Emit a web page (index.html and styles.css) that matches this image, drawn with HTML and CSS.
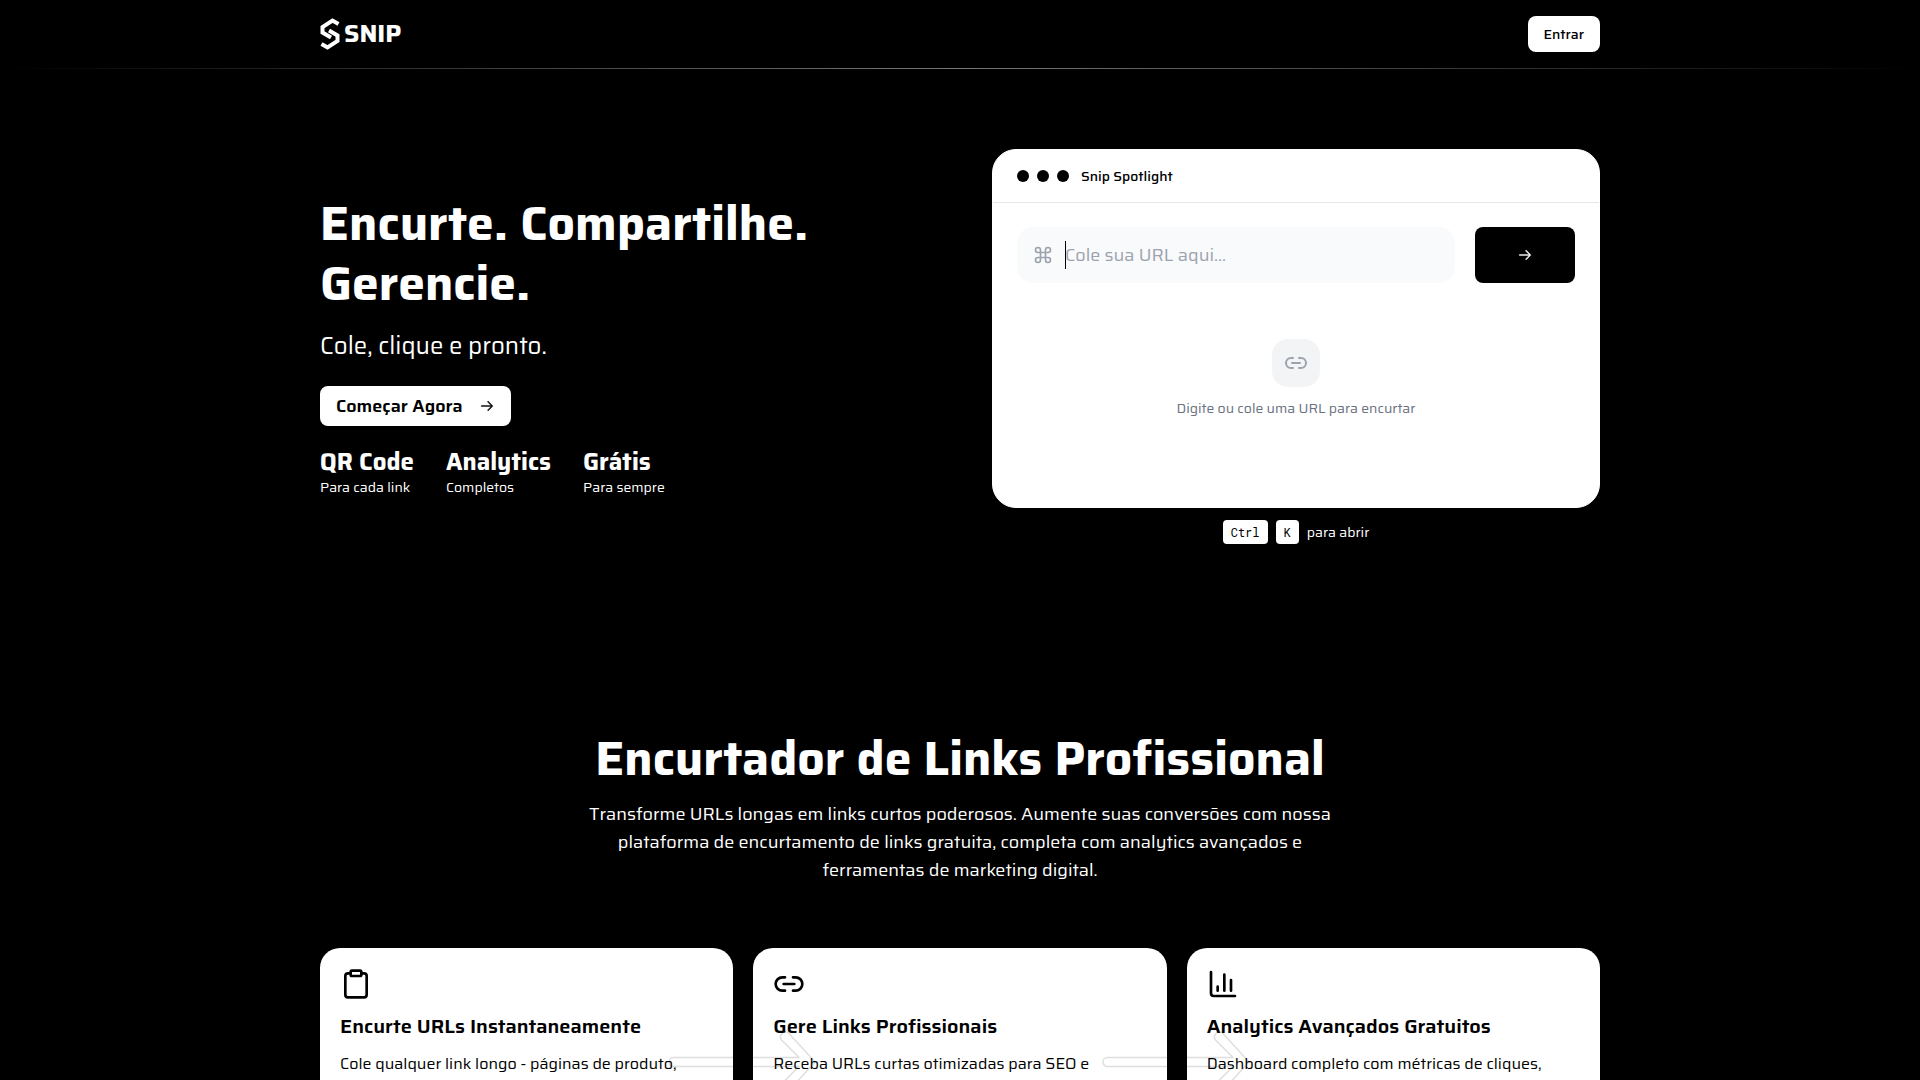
FILE: index.html
```html
<!DOCTYPE html>
<html lang="pt-BR">
<head>
<meta charset="utf-8">
<meta name="viewport" content="width=device-width, initial-scale=1">
<title>Snip</title>
<link rel="stylesheet" href="styles.css">
</head>
<body>
<div class="page">
  <header class="site-header">
    <div class="container header-row">
      <a class="brand" href="#">
        <svg class="brand-mark" viewBox="0 0 20 32" fill="none" stroke="currentColor" stroke-width="4" aria-hidden="true">
          <path d="M18.500 6 12.500 2.500 2.500 9v5.500l8.500 5"/><path d="M1.500 26 7.500 29.500l10-6.500v-5.500l-8.500-5"/>
        </svg>
        <span>SNIP</span>
      </a>
      <button class="btn btn-login" type="button">Entrar</button>
    </div>
  </header>

  <main>
    <section class="container hero">
      <div class="hero-copy">
        <h1>Encurte. Compartilhe. Gerencie.</h1>
        <p class="lead">Cole, clique e pronto.</p>
        <button class="btn btn-start" type="button">Começar Agora
          <svg class="arrow" viewBox="0 0 15 15" fill="currentColor" stroke="currentColor" stroke-width=".4" aria-hidden="true"><path d="M8.150 3.150a.5.5 0 0 1 .7 0l4 4a.5.5 0 0 1 0 .7l-4 4a.5.5 0 0 1-.7-.7L11.300 8H2.500a.5.5 0 0 1 0-1h8.800L8.150 3.850a.5.5 0 0 1 0-.7z"/></svg>
        </button>
        <dl class="stats">
          <div><dt>QR Code</dt><dd>Para cada link</dd></div>
          <div><dt>Analytics</dt><dd>Completos</dd></div>
          <div><dt>Grátis</dt><dd>Para sempre</dd></div>
        </dl>
      </div>

      <div class="hero-demo">
        <div class="window">
          <div class="window-bar">
            <span class="dot"></span><span class="dot"></span><span class="dot"></span>
            <span class="window-title">Snip Spotlight</span>
          </div>
          <form class="window-form">
            <label class="url-field">
              <svg viewBox="0 0 24 24" fill="none" stroke="currentColor" stroke-width="2" stroke-linecap="round" stroke-linejoin="round" aria-hidden="true"><path d="M15 6v12a3 3 0 1 0 3-3H6a3 3 0 1 0 3 3V6a3 3 0 1 0-3 3h12a3 3 0 1 0-3-3"/></svg>
              <span class="caret"></span>
              <input type="text" placeholder="Cole sua URL aqui..." aria-label="URL">
            </label>
            <button class="btn btn-go" type="button" aria-label="Encurtar">
              <svg class="arrow" viewBox="0 0 15 15" fill="currentColor" stroke="currentColor" stroke-width=".4" aria-hidden="true"><path d="M8.150 3.150a.5.5 0 0 1 .7 0l4 4a.5.5 0 0 1 0 .7l-4 4a.5.5 0 0 1-.7-.7L11.300 8H2.500a.5.5 0 0 1 0-1h8.800L8.150 3.850a.5.5 0 0 1 0-.7z"/></svg>
            </button>
          </form>
          <div class="empty">
            <div class="empty-icon">
              <svg viewBox="0 0 24 24" fill="none" stroke="currentColor" stroke-width="2" stroke-linecap="round" stroke-linejoin="round" aria-hidden="true"><path d="M9 17H7A5 5 0 0 1 7 7h2M15 7h2a5 5 0 1 1 0 10h-2M8 12h8"/></svg>
            </div>
            <p>Digite ou cole uma URL para encurtar</p>
          </div>
        </div>
        <p class="shortcut"><kbd>Ctrl</kbd><kbd>K</kbd><span>para abrir</span></p>
      </div>
    </section>

    <section class="container features">
      <h2>Encurtador de Links Profissional</h2>
      <p class="intro">Transforme URLs longas em links curtos poderosos. Aumente suas conversões com nossa plataforma de encurtamento de links gratuita, completa com analytics avançados e ferramentas de marketing digital.</p>
      <div class="cards">
        <article class="card">
          <svg class="card-icon" viewBox="0 0 24 24" fill="none" stroke="currentColor" stroke-width="2" stroke-linecap="round" stroke-linejoin="round" aria-hidden="true"><rect x="8" y="2" width="8" height="4" rx="1"/><path d="M16 4h2a2 2 0 0 1 2 2v14a2 2 0 0 1-2 2H6a2 2 0 0 1-2-2V6a2 2 0 0 1 2-2h2"/></svg>
          <h3>Encurte URLs Instantaneamente</h3>
          <p>Cole qualquer link longo - páginas de produto,</p>
          <svg class="card-flow" viewBox="0 0 148 64" fill="none" stroke="#000" stroke-opacity=".13" stroke-width="1.500" stroke-linejoin="round" aria-hidden="true"><path d="M5.500 27.500H131L113.500 10a5 5 0 0 1 7-7L147 32 120.500 61a5 5 0 0 1-7-7L131 36.500H5.500a4.500 4.500 0 0 1 0-9z"/></svg>
        </article>
        <article class="card">
          <svg class="card-icon" viewBox="0 0 24 24" fill="none" stroke="currentColor" stroke-width="2" stroke-linecap="round" stroke-linejoin="round" aria-hidden="true"><path d="M9 17H7A5 5 0 0 1 7 7h2M15 7h2a5 5 0 1 1 0 10h-2M8 12h8"/></svg>
          <h3>Gere Links Profissionais</h3>
          <p>Receba URLs curtas otimizadas para SEO e</p>
          <svg class="card-flow" viewBox="0 0 148 64" fill="none" stroke="#000" stroke-opacity=".13" stroke-width="1.500" stroke-linejoin="round" aria-hidden="true"><path d="M5.500 27.500H131L113.500 10a5 5 0 0 1 7-7L147 32 120.500 61a5 5 0 0 1-7-7L131 36.500H5.500a4.500 4.500 0 0 1 0-9z"/></svg>
        </article>
        <article class="card">
          <svg class="card-icon" viewBox="0 0 24 24" fill="none" stroke="currentColor" stroke-width="2" stroke-linecap="round" stroke-linejoin="round" aria-hidden="true"><path d="M3 3v16a2 2 0 0 0 2 2h16M18 17V9M13 17V5M8 17v-3"/></svg>
          <h3>Analytics Avançados Gratuitos</h3>
          <p>Dashboard completo com métricas de cliques,</p>
        </article>
      </div>
    </section>
  </main>
</div>
</body>
</html>
```
FILE: styles.css
```css
* { box-sizing: border-box; margin: 0; padding: 0; }

body {
  background: #000;
  color: #fff;
  font-family: "Saira", Roboto, "Liberation Sans", sans-serif;
  font-size: 16px;
  line-height: 24px;
}

svg { display: block; flex: none; }

.page { height: 100vh; overflow: hidden; }

.container { width: 100%; max-width: 1328px; margin: 0 auto; padding: 0 24px; }

.btn {
  display: inline-flex;
  align-items: center;
  justify-content: center;
  border: 0;
  border-radius: 8px;
  background: #fff;
  color: #000;
  font-family: inherit;
  cursor: pointer;
}

.arrow { width: 16px; height: 16px; }

/* Header */
.site-header::after {
  content: "";
  display: block;
  height: 1px;
  background: linear-gradient(90deg, transparent, #777, transparent);
}
.header-row { display: flex; align-items: center; justify-content: space-between; height: 68px; }
.brand { display: flex; align-items: center; gap: 4px; color: #fff; font-size: 25px; font-weight: 700; text-decoration: none; }
.brand-mark { width: 20px; height: 32px; }
.btn-login { height: 36px; padding: 0 16px; font-size: 14px; line-height: 21px; font-weight: 500; }

/* Hero */
.hero { display: grid; grid-template-columns: 1fr 1fr; gap: 64px; align-items: center; padding-top: 80px; }
.hero-copy { padding-bottom: 4px; }
h1, h2 { font-size: 48px; line-height: 60px; font-weight: 700; }
.lead { margin-top: 16px; font-size: 24px; line-height: 32px; }
.btn-start { height: 40px; margin-top: 24px; padding: 0 16px; gap: 16px; font-size: 18px; font-weight: 600; }
.stats { display: flex; gap: 32px; margin-top: 20px; }
.stats dt { font-size: 24px; line-height: 32px; font-weight: 700; }
.stats dd { font-size: 14px; line-height: 18px; }

.window { min-height: 359px; border: 1px solid #fff; border-radius: 24px; background: #fff; color: #000; }
.window-bar { display: flex; align-items: center; gap: 8px; height: 53px; padding: 0 24px; border-bottom: 1px solid #e5e7eb; }
.dot { width: 12px; height: 12px; border-radius: 50%; background: #000; }
.window-title { margin-left: 4px; font-size: 14px; line-height: 21px; font-weight: 500; }
.window-form { display: flex; gap: 20px; padding: 24px; }
.url-field { position: relative; display: flex; flex: 1; align-items: center; gap: 12px; height: 56px; padding: 0 16px; border-radius: 16px; background: #f9fafb; color: #9ca3af; }
.url-field svg { width: 20px; height: 20px; }
.url-field input { flex: 1; min-width: 0; border: 0; outline: 0; background: none; color: #000; font-family: inherit; font-size: 18px; line-height: 28px; }
.url-field input::placeholder { color: #9ca3af; }
.caret { position: absolute; left: 48px; top: 14px; width: 1px; height: 28px; background: #000; }
.btn-go { width: 100px; height: 56px; background: #000; color: #fff; }
.empty { display: flex; flex-direction: column; align-items: center; gap: 12px; padding: 32px 24px; color: #6b7280; font-size: 14px; line-height: 18px; }
.empty-icon { display: grid; place-items: center; width: 48px; height: 48px; border-radius: 16px; background: #f3f4f6; color: #9ca3af; }
.empty-icon svg { width: 24px; height: 24px; }

.shortcut { display: flex; align-items: center; justify-content: center; gap: 8px; margin-top: 12px; font-size: 14px; line-height: 21px; }
kbd { height: 24px; padding: 0 8px; border-radius: 4px; background: #fff; color: #000; font-family: "Roboto Mono", "Liberation Mono", monospace; font-size: 12px; line-height: 24px; }

/* Features */
.features { padding-top: 185px; text-align: center; }
.intro { max-width: 768px; margin: 11px auto 0; font-size: 18px; line-height: 28px; }
.cards { display: grid; grid-template-columns: repeat(3, 1fr); gap: 20px; margin-top: 64px; text-align: left; }
.card { position: relative; padding: 20px 20px 80px; border-radius: 20px; background: #fff; color: #000; }
.card-icon { width: 32px; height: 32px; }
.card h3, .card p { position: relative; z-index: 2; }
.card h3 { margin-top: 12px; font-size: 20px; line-height: 28px; font-weight: 600; }
.card p { margin-top: 12px; font-size: 16px; line-height: 24px; }
.card-flow { position: absolute; z-index: 1; top: 82px; right: -83px; width: 148px; height: 64px; }
```
